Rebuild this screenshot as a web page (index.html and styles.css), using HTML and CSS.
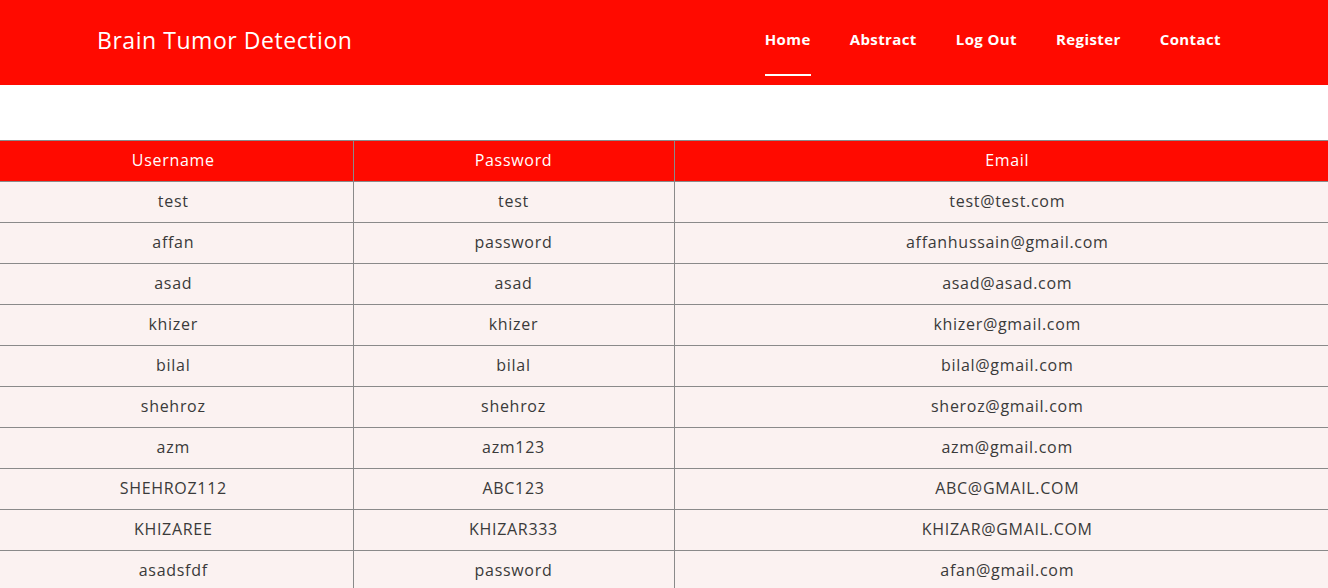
FILE: index.html
```html
<!DOCTYPE html>
<html lang="en">
<head>
<meta charset="utf-8">
<title>Brain Tumor Detection</title>
<link rel="stylesheet" href="styles.css">
</head>
<body>
<header class="topbar">
  <div class="brand">Brain Tumor Detection</div>
  <nav class="nav">
    <a class="nav-link active" href="#">Home</a>
    <a class="nav-link" href="#">Abstract</a>
    <a class="nav-link" href="#">Log Out</a>
    <a class="nav-link" href="#">Register</a>
    <a class="nav-link" href="#">Contact</a>
  </nav>
</header>
<main class="content">
  <table class="users">
    <colgroup>
      <col class="c1"><col class="c2"><col class="c3">
    </colgroup>
    <thead>
      <tr><th>Username</th><th>Password</th><th>Email</th></tr>
    </thead>
    <tbody>
      <tr><td>test</td><td>test</td><td>test@test.com</td></tr>
      <tr><td>affan</td><td>password</td><td>affanhussain@gmail.com</td></tr>
      <tr><td>asad</td><td>asad</td><td>asad@asad.com</td></tr>
      <tr><td>khizer</td><td>khizer</td><td>khizer@gmail.com</td></tr>
      <tr><td>bilal</td><td>bilal</td><td>bilal@gmail.com</td></tr>
      <tr><td>shehroz</td><td>shehroz</td><td>sheroz@gmail.com</td></tr>
      <tr><td>azm</td><td>azm123</td><td>azm@gmail.com</td></tr>
      <tr><td>SHEHROZ112</td><td>ABC123</td><td>ABC@GMAIL.COM</td></tr>
      <tr><td>KHIZAREE</td><td>KHIZAR333</td><td>KHIZAR@GMAIL.COM</td></tr>
      <tr><td>asadsfdf</td><td>password</td><td>afan@gmail.com</td></tr>
    </tbody>
  </table>
</main>
</body>
</html>
```
FILE: styles.css
```css
* { box-sizing: border-box; }
html, body { margin: 0; padding: 0; }
body {
  font-family: "Open Sans", "Liberation Sans", sans-serif;
  background: #ffffff;
  color: #3a3a3a;
}
.topbar {
  height: 85px;
  background: #ff0a00;
  display: flex;
  align-items: center;
  justify-content: space-between;
  padding: 0 107px 0 97px;
}
.brand {
  color: #ffffff;
  font-size: 23px;
  font-weight: 500;
  letter-spacing: 0.55px;
  margin-top: -5px;
}
.nav {
  display: flex;
  gap: 39px;
  align-self: flex-start;
}
.nav-link {
  display: block;
  color: #ffffff;
  text-decoration: none;
  font-size: 15px;
  font-weight: 700;
  letter-spacing: 0.4px;
  line-height: 20px;
  padding-top: 29px;
  height: 76px;
  border-bottom: 2px solid transparent;
}
.nav-link.active { border-bottom-color: #ffffff; }
.content { padding-top: 55px; }
.users {
  width: 100%;
  border-collapse: collapse;
  table-layout: fixed;
  font-size: 16px;
  letter-spacing: 0.7px;
}
.c1 { width: 353px; }
.c2 { width: 321px; }
.users th, .users td {
  border: 1px solid #8a8a8a;
  height: 41px;
  text-align: center;
  padding: 0 0 2px 0;
}
.users tr > :first-child { border-left: 0; padding-right: 6px; }
.users tr > :last-child { border-right: 0; padding-left: 12px; }
.users th {
  background: #ff0a00;
  color: #ffffff;
  font-weight: 400;
}
.users td {
  background: #fbf2f1;
  color: #3a3a3a;
}
```
